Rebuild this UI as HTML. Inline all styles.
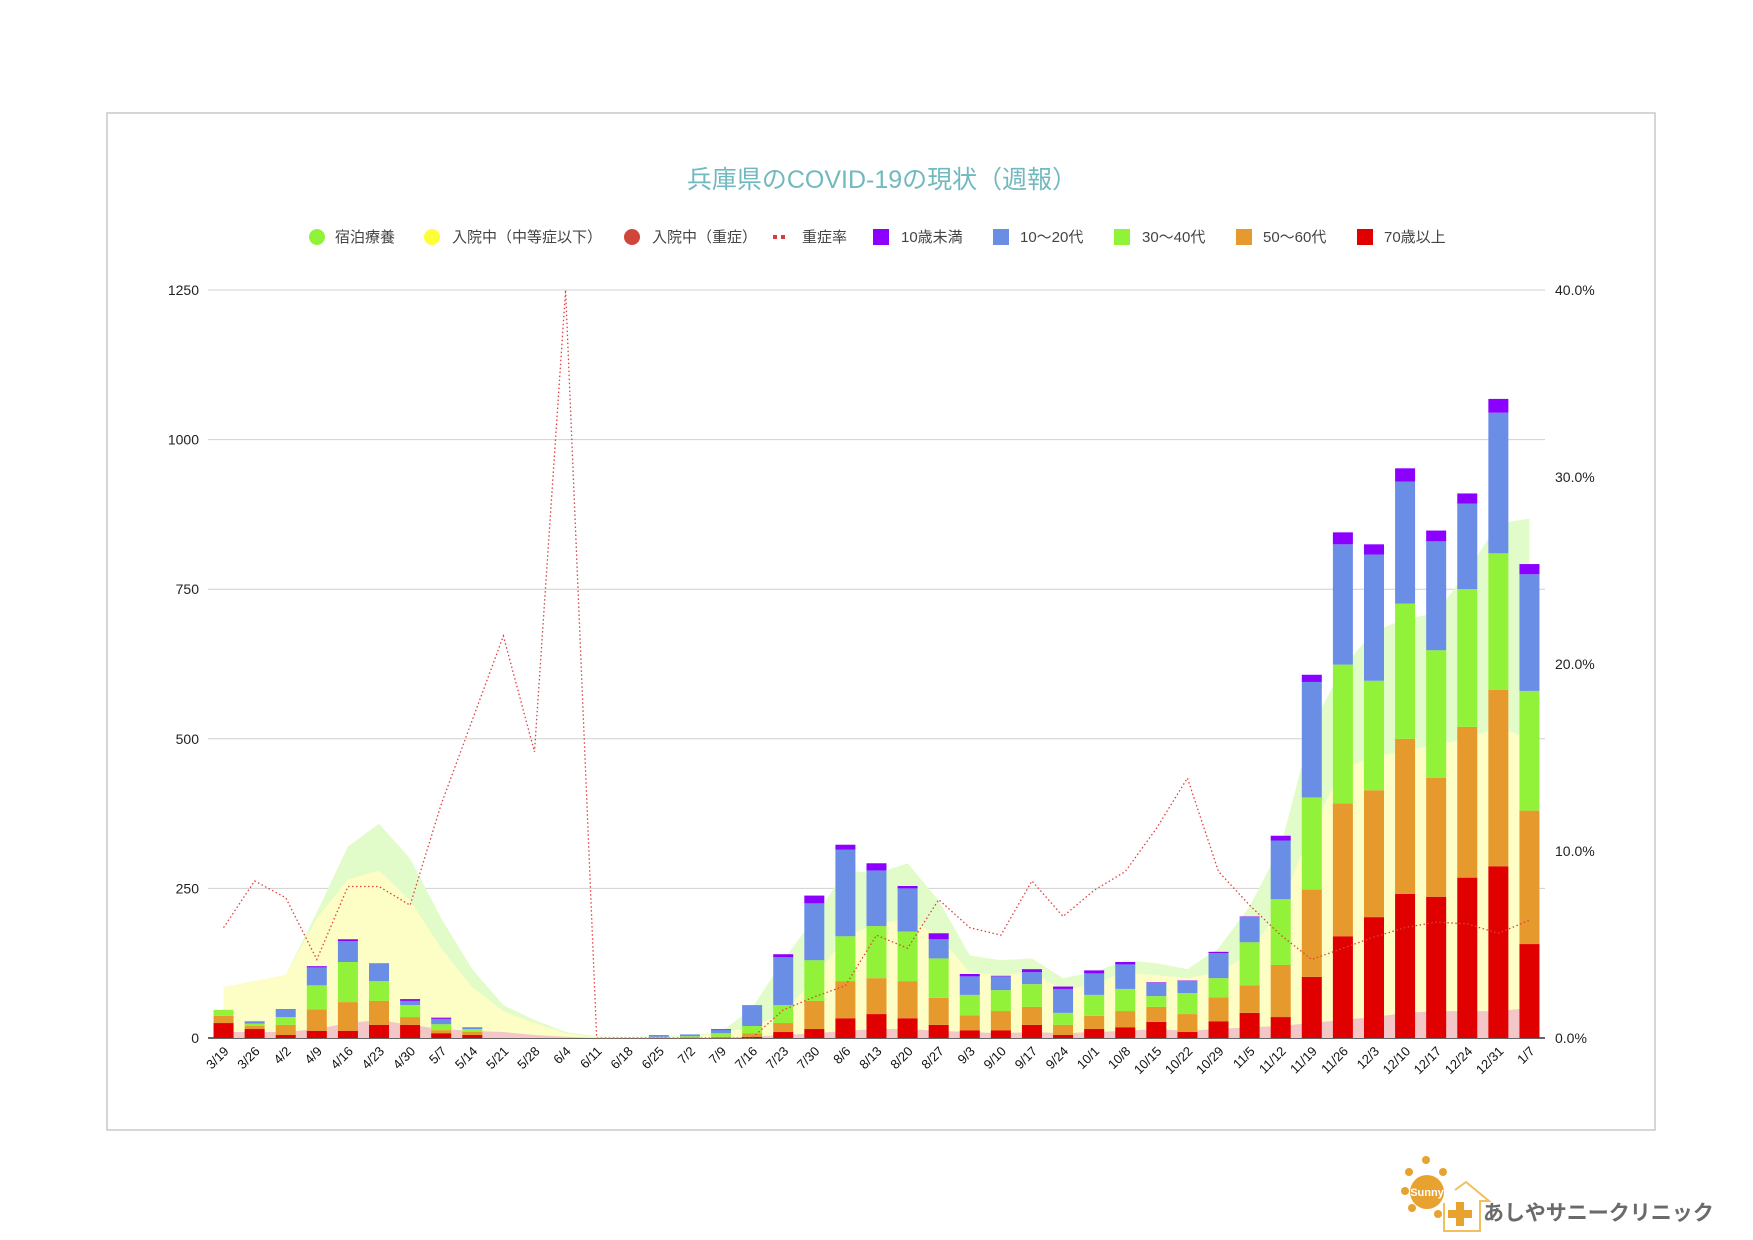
<!DOCTYPE html>
<html><head><meta charset="utf-8">
<style>
html,body{margin:0;padding:0;background:#fff;width:1753px;height:1240px;overflow:hidden}
svg{display:block}
text{font-family:"Liberation Sans","Noto Sans CJK JP",sans-serif}
</style></head><body>
<svg id="s" width="1753" height="1240" xmlns="http://www.w3.org/2000/svg">
<rect x="107" y="113" width="1548" height="1017" fill="#fff" stroke="#c8c8c8" stroke-width="1.5"/>
<text x="882" y="188" text-anchor="middle" font-size="25" fill="#72b9bf">兵庫県のCOVID-19の現状（週報）</text>
<g font-size="15" fill="#444">
<circle cx="317" cy="237" r="8" fill="#92f23a"/><text x="335" y="242">宿泊療養</text>
<circle cx="432" cy="237" r="8" fill="#fdfd3a"/><text x="452" y="242">入院中（中等症以下）</text>
<circle cx="632" cy="237" r="8" fill="#d0463a"/><text x="652" y="242">入院中（重症）</text>
<rect x="773" y="235" width="4" height="4" fill="#d04040"/><rect x="781" y="235" width="4" height="4" fill="#d04040"/>
<text x="802" y="242">重症率</text>
<rect x="873" y="229" width="16" height="16" fill="#8b00ff"/><text x="901" y="242">10歳未満</text>
<rect x="993" y="229" width="16" height="16" fill="#6a8ee6"/><text x="1020" y="242">10〜20代</text>
<rect x="1114" y="229" width="16" height="16" fill="#92f23a"/><text x="1142" y="242">30〜40代</text>
<rect x="1236" y="229" width="16" height="16" fill="#e69a2e"/><text x="1263" y="242">50〜60代</text>
<rect x="1357" y="229" width="16" height="16" fill="#e00000"/><text x="1384" y="242">70歳以上</text>
</g>
<g id="plot"></g>
<g transform="translate(1399,1150)">
<g fill="#e8a230"><circle cx="27" cy="10" r="4"/><circle cx="10" cy="22" r="4"/><circle cx="6" cy="41" r="4"/><circle cx="13" cy="58" r="4"/><circle cx="39" cy="64" r="4"/><circle cx="44" cy="22" r="4"/></g>
<path d="M45 53 L45 81 L81 81 L81 51 L90 51 L67 32 L56 40" fill="none" stroke="#f0c060" stroke-width="2"/>
<circle cx="28" cy="42" r="17" fill="#e8a230"/>
<text x="28" y="46" text-anchor="middle" font-size="11" font-weight="bold" fill="#fff">Sunny</text>
<rect x="57" y="52" width="8" height="24" fill="#e8a230"/><rect x="49" y="60" width="24" height="8" fill="#e8a230"/>
<text x="84" y="70" font-size="21" fill="#6a6a6a" font-weight="bold">あしやサニークリニック</text>
</g>
</svg>
<script>
const ns="http://www.w3.org/2000/svg",g=document.getElementById('plot');
function el(t,a,txt){const e=document.createElementNS(ns,t);for(const k in a)e.setAttribute(k,a[k]);if(txt!=null)e.textContent=txt;g.appendChild(e);return e}
const L=208,R=1545,Y0=1038,S=748/1250;
const y=v=>Y0-v*S;
const labels="3/19 3/26 4/2 4/9 4/16 4/23 4/30 5/7 5/14 5/21 5/28 6/4 6/11 6/18 6/25 7/2 7/9 7/16 7/23 7/30 8/6 8/13 8/20 8/27 9/3 9/10 9/17 9/24 10/1 10/8 10/15 10/22 10/29 11/5 11/12 11/19 11/26 12/3 12/10 12/17 12/24 12/31 1/7".split(' ');
const N=labels.length,step=(R-L)/N,cx=i=>L+step*(i+0.5);
const bars=[[25,37,47,47,47],[15,20,24,28,28],[5,22,35,47,48],[12,48,88,118,120],[12,60,127,162,165],[22,62,95,125,125],[22,35,55,62,65],[8,13,23,32,34],[5,10,15,18,18],[0,0,0,0,0],[0,0,0,0,0],[0,0,0,0,0],[0,0,0,0,0],[0,0,0,0,0],[0,0,2,5,5],[0,1,3,6,6],[0,2,8,14,15],[2,8,20,55,55],[10,25,55,135,140],[15,62,130,225,238],[33,95,170,315,323],[40,100,187,280,292],[33,95,178,250,254],[22,67,133,165,175],[13,38,72,103,107],[13,45,80,103,104],[22,52,90,110,115],[5,22,42,82,86],[15,37,72,108,113],[18,45,82,123,127],[27,52,70,92,93],[10,40,75,95,96],[28,68,100,142,144],[42,88,160,202,203],[35,122,232,330,338],[102,248,402,595,607],[170,392,624,825,845],[202,414,597,808,825],[241,500,726,930,952],[236,435,648,830,848],[268,520,750,893,910],[287,582,810,1045,1068],[157,380,580,775,792]];
const green=[85,95,105,210,320,358,300,200,115,55,30,10,3,2,3,4,10,50,130,200,280,275,292,230,138,130,133,100,110,130,125,115,150,220,320,520,620,680,700,710,780,860,868];
const yel=[85,95,105,200,265,280,230,150,85,45,25,8,2,1,2,3,8,20,40,100,170,190,200,170,110,105,110,80,90,110,105,100,110,140,220,350,450,470,480,490,500,520,500];
const pink=[10,10,10,15,25,30,22,15,12,10,5,2,0,0,0,0,0,2,5,8,12,15,15,12,10,8,10,8,10,12,15,12,15,18,20,25,30,35,42,45,45,45,50];
const rate=[5.9,8.4,7.5,4.2,8.1,8.1,7.1,12.5,17,21.5,15.3,40,0,0,0,0,0,0,1.5,2.2,2.8,5.5,4.8,7.4,5.9,5.5,8.4,6.5,7.9,8.9,11.2,13.9,8.9,7.1,5.5,4.2,4.8,5.4,5.9,6.2,6.1,5.6,6.3];
for(let v=0;v<=1250;v+=250){el('line',{x1:L,x2:R,y1:y(v),y2:y(v),stroke:v?'#d0d0d0':'#333','stroke-width':v?1:1.5});
el('text',{x:L-9,y:y(v)+5,'text-anchor':'end','font-size':14,fill:'#222'},v);}
for(let p=0;p<=40;p+=10){el('text',{x:R+10,y:Y0-p/40*748+5,'font-size':14,fill:'#222'},p.toFixed(1)+'%');}
function area(arr,fill){let d='M'+cx(0)+' '+Y0;arr.forEach((v,i)=>d+=' L'+cx(i)+' '+y(v));d+=' L'+cx(N-1)+' '+Y0+'Z';el('path',{d,fill})}
area(green,'#e2fcc9');area(yel,'#fdfdc6');area(pink,'#f3c7c7');
const cols=['#e00000','#e69a2e','#92f23a','#6a8ee6','#8b00ff'],bw=20;
bars.forEach((b,i)=>{let prev=0;b.forEach((v,k)=>{if(v>prev){el('rect',{x:cx(i)-bw/2,y:y(v),width:bw,height:(v-prev)*S,fill:cols[k]});}prev=Math.max(prev,v)})});
let d='';rate.forEach((r,i)=>d+=(i?' L':'M')+cx(i)+' '+(Y0-r/40*748));
el('path',{d,fill:'none',stroke:'#e04040','stroke-width':1.3,'stroke-dasharray':'1.5 2.5'});
labels.forEach((t,i)=>{el('text',{x:0,y:0,'font-size':13,fill:'#111','text-anchor':'end',transform:`translate(${cx(i)+6},${Y0+14}) rotate(-45)`},t)});
</script>
</body></html>
